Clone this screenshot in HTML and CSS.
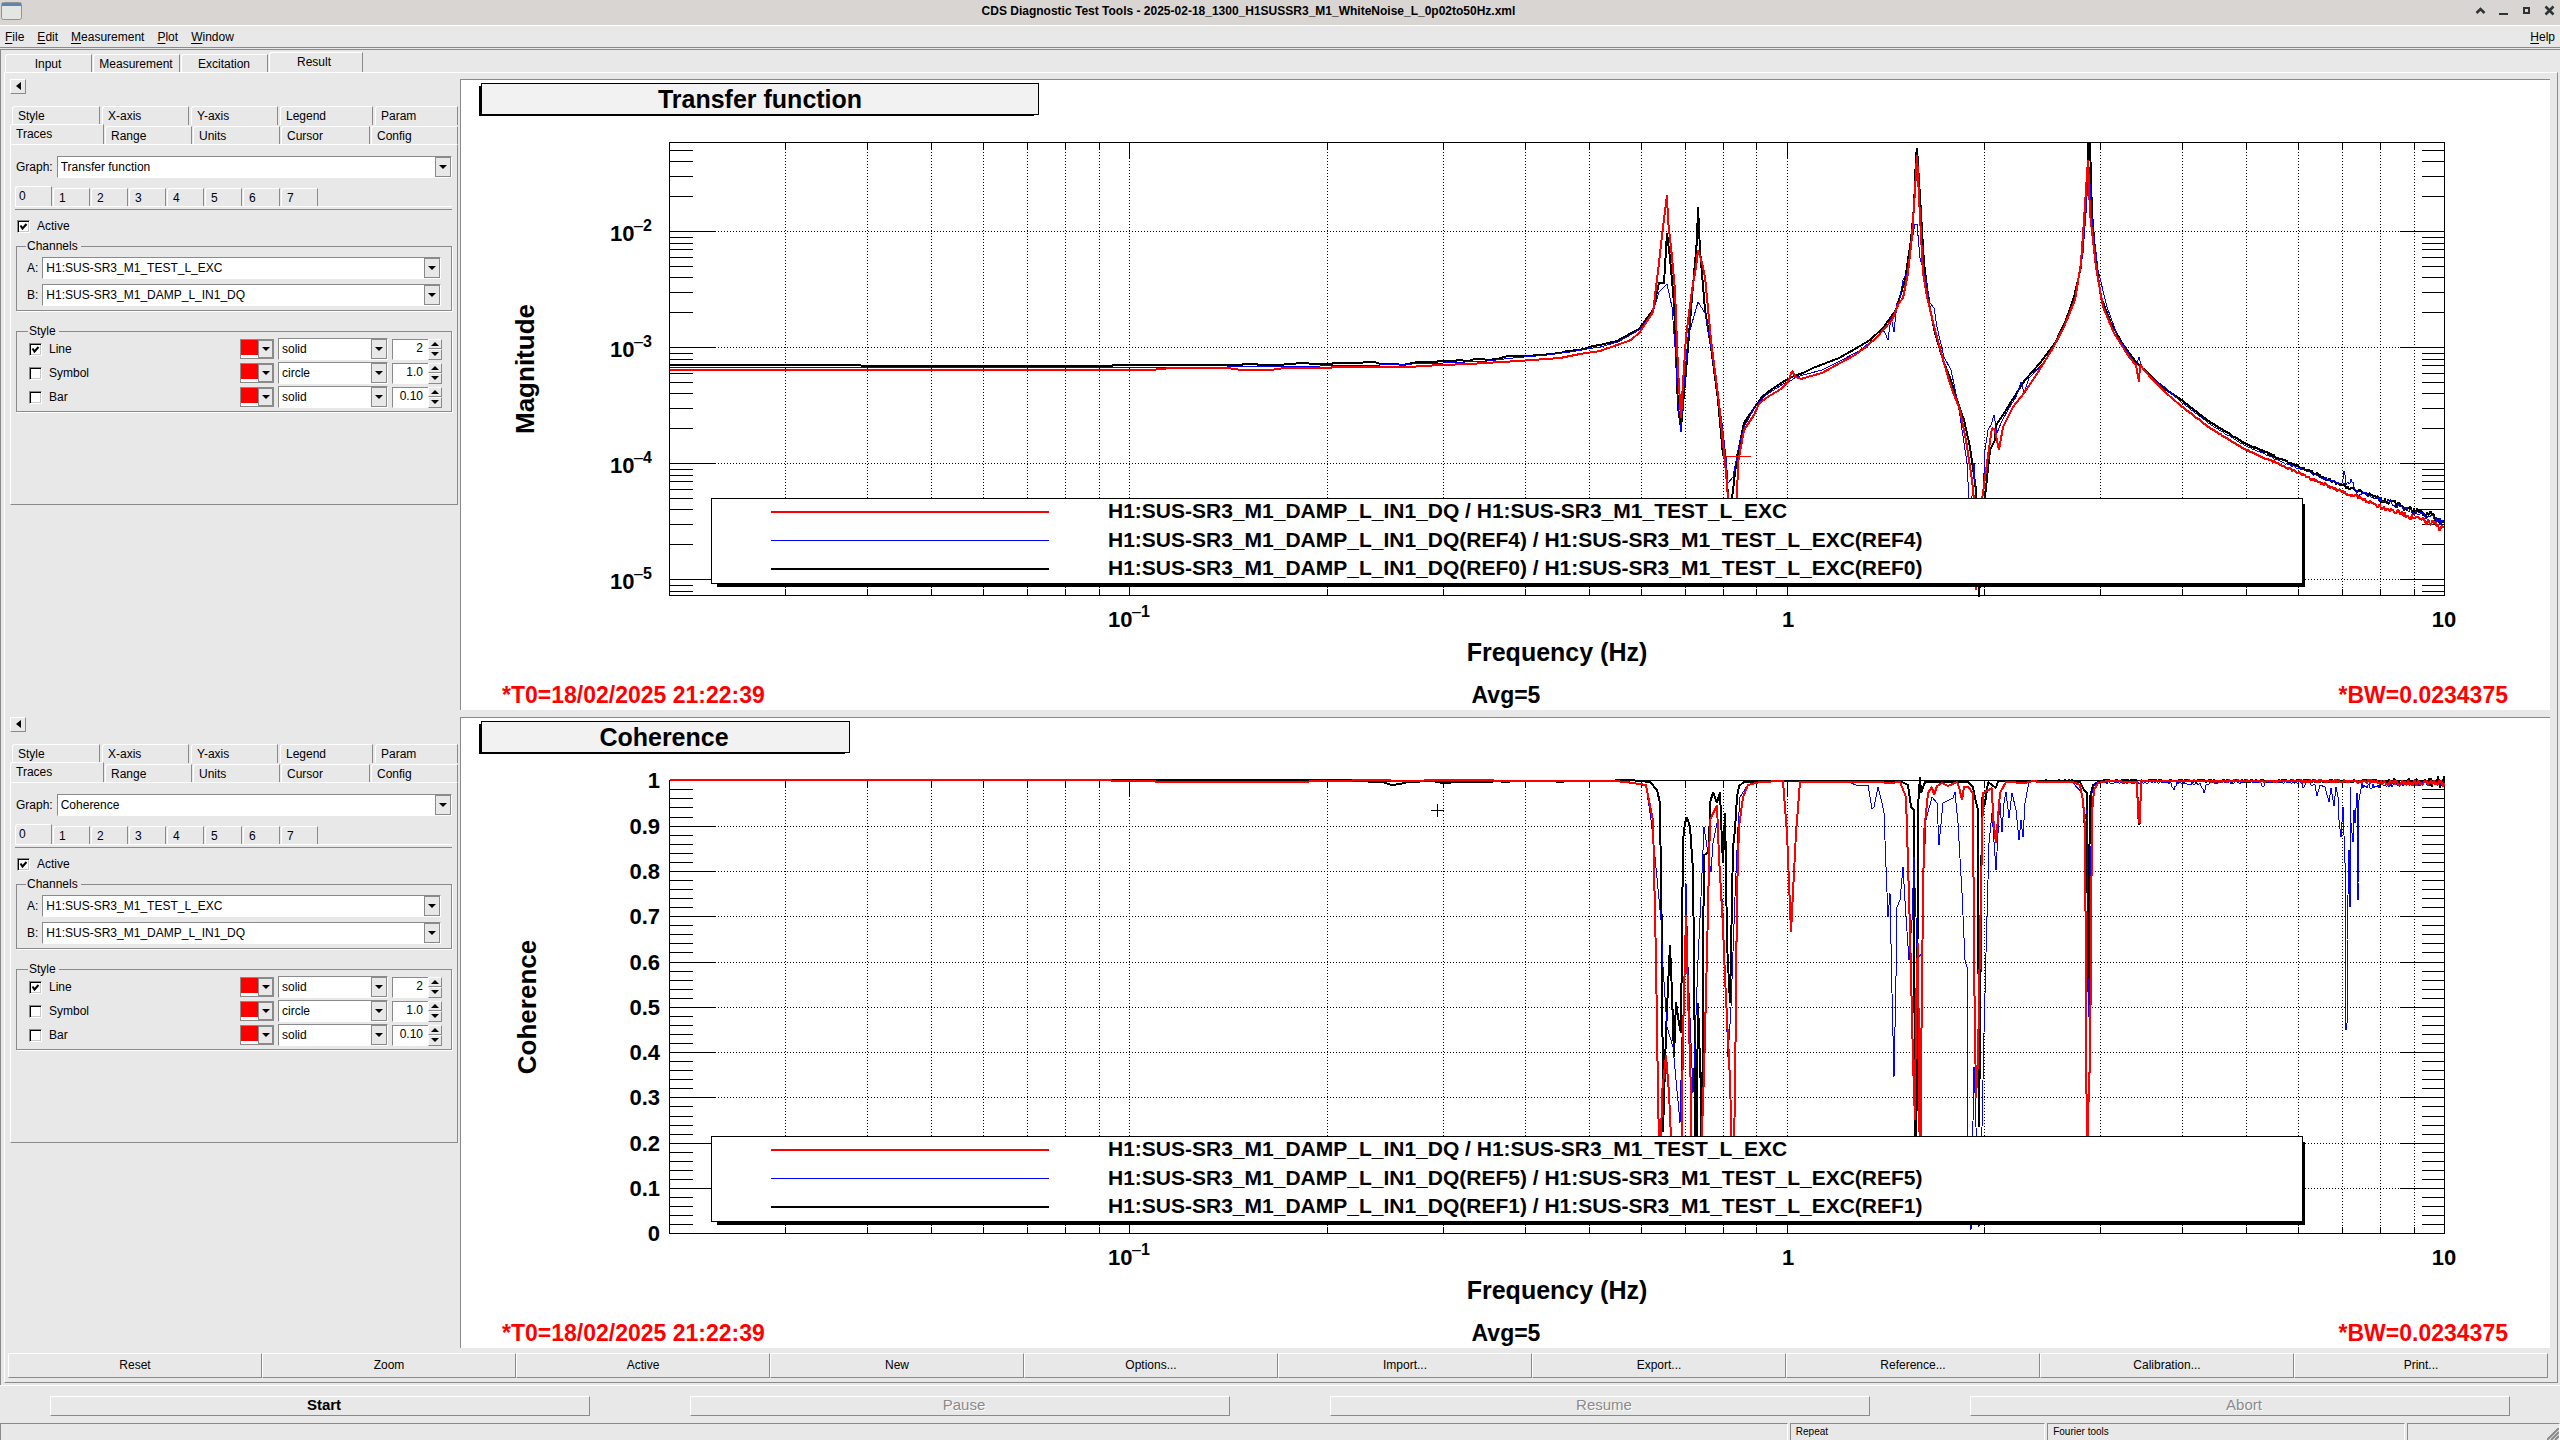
FILE: index.html
```html
<!DOCTYPE html>
<html lang="en">
<head>
    <meta charset="UTF-8">
    <meta name="viewport" content="width=device-width, initial-scale=1.0">
    <title>CDS Diagnostic Test Tools</title>
    <link rel="stylesheet" href="styles.css">
</head>
<body>
    <header class="titlebar">
        <svg class="app-icon" width="21" height="18" viewBox="0 0 21 18">
            <rect x="0.5" y="0.5" width="20" height="17" rx="2" fill="#e3e6e3" stroke="#8f948f"/>
            <rect x="1" y="1" width="19" height="3" fill="#5b84bd"/>
        </svg>
        <h1>CDS Diagnostic Test Tools - 2025-02-18_1300_H1SUSSR3_M1_WhiteNoise_L_0p02to50Hz.xml</h1>
        <div class="window-buttons">
            <button aria-label="Shade"><svg width="11" height="11" viewBox="0 0 11 11"><path d="M1.5 8 L5.500 4 L9.500 8" fill="none" stroke="#2e3436" stroke-width="2.500"/></svg></button>
            <button aria-label="Minimize"><svg width="11" height="11" viewBox="0 0 11 11"><path d="M1 9h9" stroke="#2e3436" stroke-width="2"/></svg></button>
            <button aria-label="Maximize"><svg width="11" height="11" viewBox="0 0 11 11"><rect x="3" y="3" width="5" height="5" fill="none" stroke="#2e3436" stroke-width="2"/></svg></button>
            <button aria-label="Close"><svg width="11" height="11" viewBox="0 0 11 11"><path d="M1.500 1.500l8 8M9.500 1.500l-8 8" stroke="#2e3436" stroke-width="2.500"/></svg></button>
        </div>
    </header>

    <nav class="menubar">
        <button><u>F</u>ile</button>
        <button><u>E</u>dit</button>
        <button><u>M</u>easurement</button>
        <button><u>P</u>lot</button>
        <button><u>W</u>indow</button>
        <button class="help"><u>H</u>elp</button>
    </nav>

    <main class="content">
        <div class="main-tabs" role="tablist">
            <button class="tab" role="tab">Input</button>
            <button class="tab" role="tab">Measurement</button>
            <button class="tab" role="tab">Excitation</button>
            <button class="tab active" role="tab">Result</button>
        </div>
        <div class="result">
            <div class="workspace">
                <section class="side" data-graph="Transfer function"></section>
                <figure class="plot"><svg id="transfer" viewBox="461 80 2089 630"></svg></figure>
                <section class="side" data-graph="Coherence"></section>
                <figure class="plot"><svg id="coherence" viewBox="461 718 2089 630"></svg></figure>
            </div>
            <div class="toolbar">
                <button>Reset</button>
                <button>Zoom</button>
                <button>Active</button>
                <button>New</button>
                <button>Options...</button>
                <button>Import...</button>
                <button>Export...</button>
                <button>Reference...</button>
                <button>Calibration...</button>
                <button>Print...</button>
            </div>
        </div>
    </main>

    <div class="run-buttons">
        <button class="start">Start</button>
        <button disabled>Pause</button>
        <button disabled>Resume</button>
        <button disabled>Abort</button>
    </div>

    <footer class="statusbar">
        <span></span>
        <span>Repeat</span>
        <span>Fourier tools</span>
        <span class="grip"><svg width="12" height="12" viewBox="0 0 12 12"><path d="M0 12L12 0M4 12L12 4M8 12L12 8" stroke="#8a8a8a" stroke-width="2"/></svg></span>
    </footer>

    <!-- Options panel, one copy per graph -->
    <template id="panel">
        <button class="collapse" aria-label="Hide options"><svg width="5" height="8" viewBox="0 0 5 8"><path d="M5 0v8L0 4z"/></svg></button>
        <div class="tabs tabs-back" role="tablist">
            <button class="tab" role="tab">Style</button>
            <button class="tab" role="tab">X-axis</button>
            <button class="tab" role="tab">Y-axis</button>
            <button class="tab" role="tab">Legend</button>
            <button class="tab" role="tab">Param</button>
        </div>
        <div class="tabs tabs-front" role="tablist">
            <button class="tab active" role="tab">Traces</button>
            <button class="tab" role="tab">Range</button>
            <button class="tab" role="tab">Units</button>
            <button class="tab" role="tab">Cursor</button>
            <button class="tab" role="tab">Config</button>
        </div>
        <div class="pane">
            <label class="field graph">Graph: <select><option class="graph-name"></option></select></label>
            <div class="trace-tabs" role="tablist">
                <button class="tab active" role="tab">0</button>
                <button class="tab" role="tab">1</button>
                <button class="tab" role="tab">2</button>
                <button class="tab" role="tab">3</button>
                <button class="tab" role="tab">4</button>
                <button class="tab" role="tab">5</button>
                <button class="tab" role="tab">6</button>
                <button class="tab" role="tab">7</button>
            </div>
            <label class="check is-active"><input type="checkbox" checked> Active</label>
            <fieldset class="channels">
                <legend>Channels</legend>
                <label class="field">A: <select><option>H1:SUS-SR3_M1_TEST_L_EXC</option></select></label>
                <label class="field">B: <select><option>H1:SUS-SR3_M1_DAMP_L_IN1_DQ</option></select></label>
            </fieldset>
            <fieldset class="styles">
                <legend>Style</legend>
                <div class="style-row">
                    <label class="check"><input type="checkbox" checked> Line</label>
                    <button class="color" aria-label="Line color"></button>
                    <select aria-label="Line style"><option>solid</option></select>
                    <div class="spin"><input type="text" value="2" aria-label="Line width"><button class="up" aria-label="Increase"></button><button class="down" aria-label="Decrease"></button></div>
                </div>
                <div class="style-row">
                    <label class="check"><input type="checkbox"> Symbol</label>
                    <button class="color" aria-label="Symbol color"></button>
                    <select aria-label="Symbol style"><option>circle</option></select>
                    <div class="spin"><input type="text" value="1.0" aria-label="Symbol size"><button class="up" aria-label="Increase"></button><button class="down" aria-label="Decrease"></button></div>
                </div>
                <div class="style-row">
                    <label class="check"><input type="checkbox"> Bar</label>
                    <button class="color" aria-label="Bar color"></button>
                    <select aria-label="Bar style"><option>solid</option></select>
                    <div class="spin"><input type="text" value="0.10" aria-label="Bar width"><button class="up" aria-label="Increase"></button><button class="down" aria-label="Decrease"></button></div>
                </div>
            </fieldset>
        </div>
    </template>

    <script src="script.js"></script>
</body>
</html>
```

FILE: styles.css
```css
/* General */
* {
    box-sizing: border-box;
}

body {
    margin: 0;
    min-height: 100vh;
    display: flex;
    flex-direction: column;
    background: #e8e8e8;
    color: #000;
    font-family: "Liberation Sans", Arial, sans-serif;
    font-size: 12px;
    line-height: 14px;
}

button,
input,
select {
    font: inherit;
    color: inherit;
    margin: 0;
}

button {
    padding: 0;
    border: none;
    border-radius: 0;
    background: #e8e8e8;
}

/* Window title */
.titlebar {
    display: flex;
    align-items: center;
    height: 25px;
    padding: 0 5px 4px 1px;
    background: #d9d5d2;
}

.titlebar h1 {
    flex: 1;
    margin: 0;
    text-align: center;
    font-size: 12px;
    font-weight: bold;
}

.window-buttons {
    display: flex;
    gap: 12px;
}

.window-buttons button {
    display: flex;
    background: none;
}

/* Menu */
.menubar {
    display: flex;
    align-items: center;
    gap: 13px;
    height: 23px;
    padding: 0 5px;
    border-top: 1px solid #fff;
    border-bottom: 1px solid #8a8a8a;
}

.menubar u {
    text-underline-offset: 2px;
}

.menubar .help {
    margin-left: auto;
}

/* Tabs */
.tab {
    padding: 0 5px;
    border: 1px solid #fff;
    border-right-color: #8a8a8a;
    border-bottom: none;
    border-top-left-radius: 3px;
    text-align: left;
}

.content {
    flex: 1;
    display: flex;
    flex-direction: column;
    margin-top: 1px;
    padding: 2px 2px 2px 3px;
    border: 1px solid #8a8a8a;
    border-right: none;
    border-bottom: none;
}

.main-tabs {
    display: flex;
    align-items: flex-end;
    gap: 1px;
    padding-left: 1px;
}

.main-tabs .tab {
    width: 87px;
    height: 18px;
    padding: 0 1px 0 0;
    text-align: center;
}

.main-tabs .active {
    width: 94px;
    height: 20px;
    padding-right: 4px;
    padding-bottom: 2px;
}

.result {
    flex: 1;
    display: flex;
    flex-direction: column;
    padding: 6px 7px 4px 5px;
    border: 1px solid #fff;
    border-right-color: #8a8a8a;
    border-bottom-color: #8a8a8a;
}

/* Options on the left, graphs on the right */
.workspace {
    flex: 1;
    display: grid;
    grid-template-columns: 448px 1fr;
    grid-template-rows: 1fr 1fr;
    gap: 7px 2px;
}

.plot {
    margin: 0;
    background: #fff;
    border: 1px solid #8a8a8a;
    border-right: none;
    border-bottom: none;
}

.plot svg {
    display: block;
    width: 100%;
}

.side {
    display: flex;
    flex-direction: column;
}

.collapse {
    display: flex;
    align-items: center;
    justify-content: center;
    width: 16px;
    height: 15px;
    margin-bottom: 12px;
    padding-bottom: 1px;
    border: 1px solid #fff;
    border-right-color: #8a8a8a;
    border-bottom-color: #8a8a8a;
}

.tabs {
    display: flex;
    gap: 2px;
    height: 19px;
}

.tabs .tab {
    width: 88px;
}

.tabs .tab:nth-child(n+2) {
    width: 87px;
}

.tabs .tab:last-child {
    flex: 1;
}

.tabs-back {
    padding-left: 2px;
}

.tabs-back .tab:nth-child(4) {
    width: 93px;
}

.tabs-front {
    align-items: flex-end;
    gap: 1px;
}

.tabs-front .tab {
    height: 18px;
}

.tabs-front .tab:nth-child(4) {
    width: 89px;
}

.tabs-front .active {
    width: 94px;
    height: 20px;
    padding-bottom: 2px;
}

.pane {
    height: 361px;
    padding: 11px 5px 0 4px;
    border: 1px solid #fff;
    border-right-color: #8a8a8a;
    border-bottom-color: #8a8a8a;
}

/* Fields */
.field {
    display: flex;
    align-items: center;
    gap: 4px;
}

select {
    flex: 1;
    min-width: 0;
    height: 22px;
    padding: 0 18px 0 3px;
    appearance: none;
    border: 1px solid #8a8a8a;
    border-right-color: #fff;
    border-bottom-color: #fff;
    border-radius: 0;
    background: #fff url("data:image/svg+xml,%3Csvg xmlns='http://www.w3.org/2000/svg' width='16' height='20'%3E%3Crect x='0.5' y='0.5' width='15' height='19' fill='%23e8e8e8' stroke='%238a8a8a'/%3E%3Cpath d='M4 8h8l-4 4z'/%3E%3C/svg%3E") no-repeat right top;
}

.graph {
    padding: 0 0 0 1px;
}

.trace-tabs {
    display: flex;
    align-items: flex-end;
    gap: 1px;
    height: 23px;
    margin-top: 9px;
    border-bottom: 1px solid #8a8a8a;
    box-shadow: inset 0 -2px #e8e8e8, inset 0 -3px #fff;
    padding-bottom: 3px;
}

.trace-tabs .tab {
    width: 37px;
    height: 18px;
}

.trace-tabs .active {
    height: 20px;
    padding: 0 3px 2px;
}

.check {
    display: flex;
    align-items: center;
    gap: 7px;
    flex: 1;
}

.is-active {
    margin: 9px 0 0 2px;
}

.check input {
    appearance: none;
    width: 13px;
    height: 13px;
    background: #fff;
    border: 1px solid #8a8a8a;
    border-right-color: #fff;
    border-bottom-color: #fff;
    box-shadow: inset 1px 1px #000, inset -1px -1px #c8c8c8;
}

.check input:checked {
    background: #fff url("data:image/svg+xml,%3Csvg xmlns='http://www.w3.org/2000/svg' width='11' height='11'%3E%3Cpath d='M2.500 4.500l2 3 4-4.500' fill='none' stroke='%23000' stroke-width='2'/%3E%3C/svg%3E") no-repeat center;
}

fieldset {
    display: flex;
    flex-direction: column;
    margin: 0 0 0 1px;
    padding: 0 10px 4px;
    border: 1px solid #8a8a8a;
    box-shadow: 1px 1px #fff;
}

legend {
    margin-left: -1px;
    padding: 0 3px 0 1px;
}

.channels {
    gap: 5px;
    margin-top: 6px;
    padding-top: 4px;
}

.styles {
    gap: 2px;
    margin-top: 13px;
    padding: 0 9px 3px 12px;
}

.style-row {
    display: flex;
    align-items: center;
    gap: 4px;
}

.style-row select {
    flex: none;
    width: 110px;
}

.color {
    width: 34px;
    height: 20px;
    border: 1px solid #8a8a8a;
    background: #fff url("data:image/svg+xml,%3Csvg xmlns='http://www.w3.org/2000/svg' width='32' height='18'%3E%3Cpath d='M0 0h17v15H0z' fill='%23f00'/%3E%3Crect x='17.500' y='0.500' width='14' height='17' fill='%23e8e8e8' stroke='%238a8a8a'/%3E%3Cpath d='M21 7h8l-4 4z'/%3E%3C/svg%3E") no-repeat left top;
}

.spin {
    display: grid;
    grid-template-columns: 36px 14px;
    grid-template-rows: 10px 11px;
}

.spin input {
    grid-row: span 2;
    min-width: 0;
    padding: 0 5px 2px 0;
    border: 1px solid #8a8a8a;
    border-right: none;
    border-bottom-color: #fff;
    text-align: right;
    background: #fff;
}

.spin button {
    border: 1px solid #fff;
    border-right-color: #8a8a8a;
    border-bottom-color: #8a8a8a;
    background: url("data:image/svg+xml,%3Csvg xmlns='http://www.w3.org/2000/svg' width='8' height='4'%3E%3Cpath d='M0 4h8L4 0z'/%3E%3C/svg%3E") no-repeat center;
}

.spin .down {
    background-image: url("data:image/svg+xml,%3Csvg xmlns='http://www.w3.org/2000/svg' width='8' height='4'%3E%3Cpath d='M0 0h8L4 4z'/%3E%3C/svg%3E");
}

/* Bottom buttons */
.toolbar {
    display: flex;
    height: 25px;
    margin: 5px 2px 0 -2px;
}

.toolbar button,
.run-buttons button {
    flex: 1;
    padding-bottom: 2px;
    border: 1px solid #fff;
    border-right-color: #8a8a8a;
    border-bottom-color: #8a8a8a;
}

.run-buttons {
    display: flex;
    gap: 100px;
    height: 38px;
    padding: 10px 50px 7px;
    border-top: 1px solid #fff;
}

.run-buttons button {
    padding-left: 8px;
    font-size: 15px;
}

.run-buttons .start {
    font-weight: bold;
}

.run-buttons button:disabled {
    color: #8a8a8a;
    text-shadow: 1px 1px #fff;
}

.statusbar {
    display: grid;
    grid-template-columns: 70fr 10fr 14fr 6fr;
    gap: 2px;
    height: 17px;
    font-size: 10px;
}

.statusbar span {
    padding: 1px 5px;
    border: 1px solid #8a8a8a;
    border-right-color: #fff;
    border-bottom: none;
}

.statusbar .grip {
    display: flex;
    justify-content: flex-end;
    align-items: flex-end;
    padding: 0;
}

/* Graphs */
.plot text {
    font-size: 22px;
    font-weight: bold;
}

.plot .head,
.plot .axis-title {
    font-size: 25px;
    text-anchor: middle;
}

.plot .y-title {
    font-size: 26px;
}

.plot .note {
    font-size: 23px;
}

.plot .red {
    fill: #f00;
}

.plot .entry {
    font-size: 21px;
}

.plot .power {
    font-size: 16px;
}

.plot .minus {
    font-weight: normal;
}

.plot .end {
    text-anchor: end;
}

.plot .middle {
    text-anchor: middle;
}

.plot path,
.plot rect {
    shape-rendering: crispEdges;
}

.plot .line {
    fill: none;
    stroke: #000;
}

.plot .cursor {
    stroke: #f00;
}

.plot .grid {
    fill: none;
    stroke: #000;
    stroke-dasharray: 1 2;
}

.plot .box {
    fill: #fff;
    stroke: #000;
}

.plot .head-box {
    fill: #f2f2f2;
    stroke: #000;
}

.plot .trace {
    fill: none;
    stroke-width: 2;
    stroke-linejoin: bevel;
}

.plot .trace.black {
    stroke: #000;
}

.plot .trace.red {
    fill: none;
    stroke: #f00;
}

.plot .trace.blue {
    stroke: #00f;
    stroke-width: 1;
}
```

FILE: script.js
```javascript
// Fill the option panels
document.querySelectorAll(".side").forEach(function (side) {
    side.appendChild(document.getElementById("panel").content.cloneNode(true));
    side.querySelector(".graph-name").textContent = side.dataset.graph;
});

// Frame of the graphs: f = 1 Hz is at X1, one decade is DEC wide
var LEFT = 669, RIGHT = 2444, X1 = 1787, DEC = 657.4;

function fx(f) {
    return Math.floor(X1 + DEC * Math.log10(f));
}

function path(cls, d) {
    return '<path class="' + cls + '" d="' + d + '"/>';
}

function text(cls, x, y, s) {
    return '<text class="' + cls + '" x="' + x + '" y="' + y + '">' + s + '</text>';
}

function rect(cls, x, y, x2, y2) {
    return '<rect class="' + cls + '" x="' + x + '" y="' + y + '" width="' + (x2 - x) + '" height="' + (y2 - y) + '"/>';
}

function power(x, y, n) {
    return text("", x, y, "10") +
        '<text class="power" x="' + (x + 24) + '" y="' + (y - 10) + '"><tspan class="minus">–</tspan>' + n + '</text>';
}

// Small repeatable noise source
var seed = 7;
function noise() {
    seed = (seed * 16807) % 2147483647;
    return seed / 2147483647 - 0.5;
}

// Segments hold "x,y" points relative to an origin, in their own scale
function seg(ox, oy, sx, sy, pts) {
    return pts.trim().split(/\s+/).map(function (p) {
        var c = p.split(",");
        return [ox + c[0] / sx, oy + c[1] / sy];
    });
}

// Adds points between the given ones, with growing noise
function noisy(pts, from, to, bias) {
    var out = [];
    for (var i = 0; i < pts.length - 1; i++) {
        var a = pts[i], b = pts[i + 1];
        for (var x = a[0]; x < b[0]; x++) {
            var k = (x - a[0]) / (b[0] - a[0]);
            var t = (x - pts[0][0]) / (pts[pts.length - 1][0] - pts[0][0]);
            var amp = from + (to - from) * t * t;
            out.push([x, a[1] + (b[1] - a[1]) * k + (noise() + bias) * amp]);
        }
    }
    out.push(pts[pts.length - 1]);
    return out;
}

function trace(color, parts) {
    var d = parts.map(function (pts) {
        return "M" + pts.map(function (p) {
            return Math.round(p[0]) + " " + Math.round(p[1]);
        }).join("L");
    }).join("");
    return path("trace " + color, d);
}

function yTicks(list, len) {
    var d = "";
    list.forEach(function (y) {
        d += "M" + LEFT + " " + y + "h" + len + "M" + RIGHT + " " + y + "h-" + len;
    });
    return path("line", d);
}

function frame(o) {
    var top = o.top, bottom = o.top + 453, grid = "", ticks = "";
    for (var e = -2; e < 1; e++) {
        for (var m = 1; m < 10; m++) {
            var f = m * Math.pow(10, e), x = fx(f);
            if (f < 0.025) continue;
            var len = m === 1 ? 15 : 7;
            grid += "M" + x + " " + top + "V" + bottom;
            ticks += "M" + x + " " + top + "v" + len + "M" + x + " " + bottom + "v-" + len;
        }
    }
    o.major.forEach(function (y) {
        grid += "M" + LEFT + " " + y + "H" + RIGHT;
    });
    return '<g transform="translate(.5 .5)">' + path("grid", grid) + path("line", ticks) +
        yTicks(o.major, 45) + yTicks(o.minor, 23) +
        rect("line", LEFT, top, RIGHT, bottom) + '</g>';
}

function labels(o) {
    var t = o.top, s = "";
    s += rect("", 479, t - 56, 1034 - o.headCut, t - 26);
    s += '<g transform="translate(.5 .5)">' + rect("head-box", 481, t - 59, 1038 - o.headCut, t - 28) + '</g>';
    s += text("head", o.headX, t - 34, o.title);
    s += rect("", 717, t + 362, 2305, t + 445);
    s += '<g transform="translate(.5 .5)">' + rect("box", 711, t + 356, 2302, t + 441) + '</g>';
    ["red", "blue", "black"].forEach(function (c, i) {
        var y = t + 370 + [0, 28, 57][i];
        s += trace(c, [[[771, y], [1049, y]]]);
        s += text("entry", 1108, t + 376 + [0, 29, 57][i], o.entries[i]);
    });
    s += power(1108, t + 485, 1);
    s += text("middle", 1788, t + 485, "1") + text("middle", 2444, t + 485, "10");
    s += text("axis-title", 1557, t + 519, "Frequency (Hz)");
    s += '<text class="axis-title y-title" transform="translate(' + o.yx + ' ' + (t + 227) + ') rotate(-90)">' + o.yTitle + '</text>';
    s += text("note red", 502, t + 561, "*T0=18/02/2025 21:22:39");
    s += text("note middle", 1506, t + 561, "Avg=5");
    s += text("note red end", 2508, t + 561, "*BW=0.0234375");
    return s;
}

// ---- Transfer function ----
var major = [231, 347, 463, 579], minor = [];
for (var e = -6; e < -1; e++) {
    for (var m = 2; m < 10; m++) {
        var y = Math.round(231.3 - 116 * (e + 2 + Math.log10(m)));
        if (y > 142 && y < 595) minor.push(y);
    }
}
[2, 3, 4, 5].forEach(function (m) {
    minor.push(Math.round(231.3 - 116 * Math.log10(m)));
});

var tfBlack = seg(1080, 320, 3, 3, "-1230,135 -660,135 -655,138 95,138 97,135 485,135 490,132 530,132 532,135 610,135 615,132 645,132 650,129 685,129 690,132 755,132 758,129 845,129 852,126 885,126 900,132 945,132 970,136 1000,130 1010,126 1070,126 1075,122 1125,122 1135,119 1165,122 1185,116 1208,116 1220,120 1250,118 1285,108 1335,107 1385,104 1440,99 1460,92 1500,89 1540,79")
    .concat(seg(1600, 130, 2.703, 3, "0,645 45,632 70,618 105,598 143,540 160,460 173,458 180,310 190,385 200,520 210,830 218,895 235,690 250,500 262,330 266,230 270,360 285,540 300,650 320,810 332,975 340,990 345,1105 350,1250 358,1105 370,980 390,880 405,852 437,802 455,786 490,760 525,738 550,730 575,715 645,684 690,658 730,630 765,595 800,540 825,450 840,330 848,230 853,80 858,55 864,200 875,400 890,520 905,610 930,700 950,750 968,820 985,870 1000,950 1015,1080 1025,1400 1040,1100 1055,960 1067,930 1070,885 1090,855 1110,815 1150,750 1190,700 1230,640 1260,570 1280,500 1300,410 1312,230 1318,110 1320,38 1324,38 1330,250 1340,400 1355,500 1380,580 1410,640 1450,695 1480,730 1520,770"))
    .concat(noisy(seg(0, 0, 1, 1, "2180,399 2210,422 2244,443 2290,463 2335,482 2380,499 2444,521"), 0.5, 9, 0));
var tfBlue = seg(1080, 320, 3, 3, "-1230,142 440,142 485,139 720,139 755,136 900,136 1000,133 1090,128 1220,122 1300,115 1400,106 1470,97 1520,88")
    .concat(seg(1600, 130, 2.703, 3, "0,652 50,636 105,600 143,545 160,485 180,462 195,530 203,650 210,820 218,905 225,800 237,620 250,580 266,517 283,550 300,650 330,880 340,980 345,1058 360,1040 372,960 390,890 420,830 450,795 495,762 520,750 530,740 600,720 650,692 700,662 740,628 765,600 770,610 779,630 787,560 794,605 803,520 808,520 820,450 830,430 843,330 852,282 858,282 866,385 880,450 893,520 902,535 912,590 930,680 950,720 968,820 985,940 993,1000 997,1110 1003,1150 1010,1000 1017,1110 1022,1360 1035,1100 1040,960 1050,900 1058,885 1064,855 1072,910 1085,880 1105,835 1125,800 1138,757 1147,790 1160,745 1200,695 1240,620 1280,520 1305,370 1315,250 1319,150 1323,110 1330,260 1345,420 1370,530 1400,620 1450,705 1458,680 1465,715 1500,750 1530,775"))
    .concat(noisy(seg(0, 0, 1, 1, "2180,401 2210,424 2244,445 2290,465 2335,482 2342,485 2344,470 2346,484 2352,480 2358,498 2362,492 2444,523"), 0.5, 9, 0));
var tfRed = seg(1080, 320, 3, 3, "-1230,150 225,150 230,147 285,144 440,144 485,150 570,150 615,145 750,144 760,141 985,141 1080,136 1170,132 1215,130 1315,124 1440,114 1500,103")
    .concat(seg(1600, 130, 2.703, 3, "0,662 45,646 85,630 107,606 143,545 160,400 171,290 180,195 185,270 195,380 203,480 210,720 218,865 225,760 233,620 250,480 260,410 266,360 275,400 285,440 300,630 322,820 332,940 340,1030 347,1105 358,1300 370,1105 372,1000 388,900 415,855 430,822 450,805 490,778 508,755 518,722 530,740 543,748 570,738 600,728 650,700 690,675 720,652 750,620 790,570 808,520 820,505 832,430 843,320 852,180 858,75 863,200 873,430 885,500 905,600 930,700 950,770 972,840 990,930 1005,1050 1012,1110 1016,1380 1033,1110 1045,1000 1060,895 1068,900 1078,960 1090,890 1115,830 1145,790 1175,740 1225,655 1255,590 1285,510 1300,400 1310,225 1320,90 1325,250 1340,410 1360,530 1390,610 1430,680 1450,705 1456,755 1459,705 1490,745 1530,790"))
    .concat(noisy(seg(0, 0, 1, 1, "2180,405 2210,428 2244,449 2290,469 2335,489 2380,506 2444,528"), 0.5, 8, 0));

var s = frame({ top: 142, major: major, minor: minor });
s += trace("black", [tfBlack]) + trace("blue", [tfBlue]) + trace("red", [tfRed]);
s += path("line cursor", "M1726 456.500h25");
s += labels({
    top: 142, title: "Transfer function", headX: 760, headCut: 0, yTitle: "Magnitude", yx: 534,
    entries: [
        "H1:SUS-SR3_M1_DAMP_L_IN1_DQ / H1:SUS-SR3_M1_TEST_L_EXC",
        "H1:SUS-SR3_M1_DAMP_L_IN1_DQ(REF4) / H1:SUS-SR3_M1_TEST_L_EXC(REF4)",
        "H1:SUS-SR3_M1_DAMP_L_IN1_DQ(REF0) / H1:SUS-SR3_M1_TEST_L_EXC(REF0)"
    ]
});
major.forEach(function (y, i) {
    s += power(610, y + 10, i + 2);
});
document.getElementById("transfer").innerHTML = s;

// ---- Coherence ----
major = [];
minor = [];
for (var i = 0; i <= 50; i++) {
    (i % 5 ? minor : major).push(Math.round(780.3 + i * 9.06));
}

var cohBlack = seg(1080, 320, 3, 3, "-1230,1380 95,1380 820,1381 880,1386 905,1387 935,1394 960,1392 985,1386 1060,1384 1090,1389 1140,1387 1230,1386 1245,1383 1280,1387 1300,1383 1420,1383 1440,1387 1460,1384 1550,1383")
    .concat(seg(1600, 760, 3, 3, "0,63 90,60 150,66 172,90 180,130 182,375 187,540 190,1115 198,820 205,680 211,555 216,700 222,890 229,725 236,790 243,820 248,240 255,190 260,172 270,200 278,330 283,600 287,1300 295,730 302,1000 306,1300 308,600 313,285 326,275 330,130 340,95 350,130 359,95 366,250 370,310 374,160 377,320 380,550 391,730 398,260 404,210 411,110 418,78 432,65 560,62 900,64 912,70 925,75 933,140 942,150 945,1350 950,960 954,140 961,50 963,100 975,65 1105,66 1118,80 1125,115 1134,150 1137,1100 1141,820 1145,110 1153,140 1158,110 1165,65 1187,85 1195,63"))
    .concat(noisy(seg(2040, 760, 3, 3, "0,63 100,63 120,66"), 1, 2, 0))
    .concat(seg(2040, 760, 3, 3, "133,90 142,100 145,695 148,400 150,110 158,75 180,64"))
    .concat(noisy(seg(2040, 760, 3, 3, "200,62 290,62"), 2, 2, 0))
    .concat(seg(2040, 760, 3, 3, "293,160 297,196 301,190"))
    .concat(noisy(seg(2040, 760, 3, 3, "304,62 1050,64"), 2, 3, 0))
    .concat(noisy(seg(2040, 760, 3, 3, "1053,66 1213,68"), 8, 14, 0));
var cohBlue = seg(1080, 320, 3, 3, "-1230,1380 220,1380 225,1382 685,1382 700,1384 1030,1382 1430,1383 1450,1385 1550,1383")
    .concat(seg(1600, 760, 3, 3, "0,63 90,65 138,78 152,180 165,290 182,480 190,620 202,800 220,860 240,1090 247,830 252,700 259,370 265,620 278,1000 285,850 295,600 303,410 313,200 322,260 333,335 340,250 350,190 358,290 370,460 377,740 384,890 394,740 405,410 413,200 420,110 440,78 480,64 740,64 775,78 803,75 815,148 822,140 833,82 845,130 852,160 858,320 863,470 870,400 876,700 881,950 887,650 892,440 900,420 908,320 918,470 926,600 935,480 942,290 950,560 958,590 965,580 970,400 978,180 995,110 1010,130 1018,255 1028,130 1060,115 1064,95 1075,190 1085,400 1095,600 1100,620 1102,1100 1112,1410 1121,920 1126,1000 1137,1400 1145,1100 1152,820 1158,580 1168,250 1175,160 1187,330 1198,165 1201,130 1207,215 1213,130 1218,95 1227,175 1237,100 1248,150 1256,240 1262,180 1268,230 1275,130 1288,66 1310,64"))
    .concat(seg(2040, 760, 3, 3, "0,66 100,68 125,100 132,190 140,150 145,650 147,772 150,420 156,100 165,70"))
    .concat(noisy(seg(2040, 760, 3, 3, "170,66 390,66"), 3, 3, 0.1))
    .concat(noisy(seg(2040, 760, 3, 3, "393,70 401,88 410,68 480,72 491,94 500,68 600,66 660,66 668,80 676,66 785,66 788,82 795,68 820,72"), 3, 3, 0))
    .concat(seg(2040, 760, 3, 3, "826,75 830,108 840,75 855,80 866,125 872,85 881,138 888,80 895,110 898,180 902,230 910,140 914,310 917,810 920,790 922,540 926,270 929,440 930,80 934,190 938,245 942,150 946,190 950,100 953,420 955,370 958,120 965,70"))
    .concat(noisy(seg(2040, 760, 3, 3, "970,75 1000,75 1213,66"), 5, 3, 0.2));
var cohRed = seg(1080, 320, 3, 3, "-1230,1380 93,1380 95,1383 225,1383 228,1386 685,1386 690,1383 815,1383 820,1380 930,1380 935,1383 1030,1383 1035,1380 1240,1380 1245,1383 1550,1383")
    .concat(seg(1600, 760, 3, 3, "0,63 45,63 100,70 137,75 158,180 167,600 175,1000 180,1300 185,1000 198,885 208,1000 215,1200 230,1350 243,1250 250,830 258,465 265,700 272,1000 276,1250 288,1350 302,1200 313,940 322,580 330,180 350,135 358,290 370,500 376,650 390,960 400,1300 404,1000 411,400 416,200 430,110 445,75 480,67 549,64 560,220 574,515 588,220 600,66 830,66 870,69 900,66 917,110 930,510 940,900 944,1080 948,730 953,550 957,930 961,1300 965,650 972,220 985,100 995,80 1001,105 1010,78 1025,68 1045,78 1070,65 1078,80 1086,120 1093,80 1105,80 1118,100 1122,600 1127,1015 1135,900 1140,540 1148,100 1175,85 1180,170 1187,250 1200,100 1218,66 1275,70 1300,64"))
    .concat(seg(2040, 760, 3, 3, "0,66 100,66 120,75 130,120 135,200 139,700 142,1300 148,940 151,935 155,160 162,90 175,70 200,63 290,65 294,160 296,185 300,185 303,64"))
    .concat(noisy(seg(2040, 760, 3, 3, "310,63 950,63"), 1, 2, 0))
    .concat(noisy(seg(2040, 760, 3, 3, "953,65 1213,70"), 5, 8, 0));

s = frame({ top: 780, major: major, minor: minor });
s += trace("black", [cohBlack]) + trace("blue", [cohBlue]) + trace("red", [cohRed]);
s += path("line", "M1437.500 804v13M1431 810.500h13");
s += labels({
    top: 780, title: "Coherence", headX: 664, headCut: 189, yTitle: "Coherence", yx: 536,
    entries: [
        "H1:SUS-SR3_M1_DAMP_L_IN1_DQ / H1:SUS-SR3_M1_TEST_L_EXC",
        "H1:SUS-SR3_M1_DAMP_L_IN1_DQ(REF5) / H1:SUS-SR3_M1_TEST_L_EXC(REF5)",
        "H1:SUS-SR3_M1_DAMP_L_IN1_DQ(REF1) / H1:SUS-SR3_M1_TEST_L_EXC(REF1)"
    ]
});
major.forEach(function (y, i) {
    s += text("end", 660, y + 8, i === 0 ? "1" : i === 10 ? "0" : "0." + (10 - i));
});
document.getElementById("coherence").innerHTML = s;
```
